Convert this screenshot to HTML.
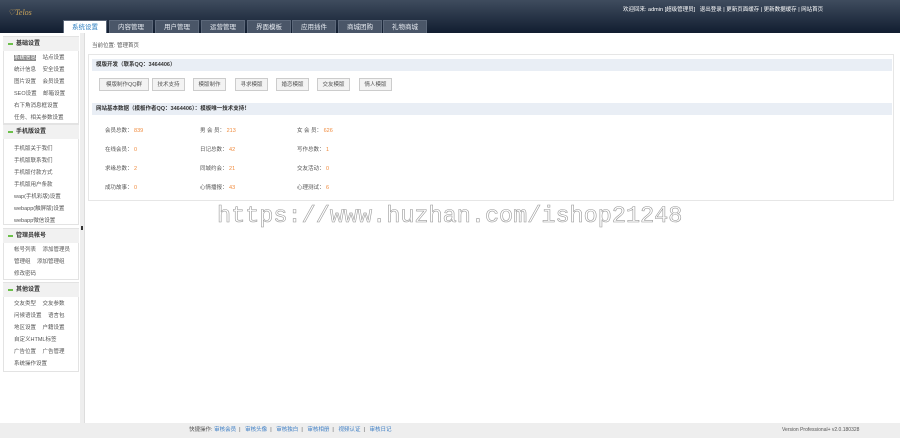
<!DOCTYPE html><html><head><meta charset="utf-8"><style>
*{margin:0;padding:0;box-sizing:border-box}
body{width:900px;height:438px;overflow:hidden;background:#fff;font-family:"Liberation Sans","Noto Sans CJK SC",sans-serif;font-size:6px;color:#555;position:relative}
.hd{position:absolute;left:0;top:0;width:900px;height:33px;background:linear-gradient(#3f4c5e,#111d30)}
.logo{position:absolute;left:8px;top:8px;color:#c9a35a;font-style:italic;font-size:8px;font-family:"Liberation Serif",serif}
.top{position:absolute;left:623px;top:5px;color:#fff;font-size:5.5px;white-space:nowrap}
.tab{position:absolute;top:20px;height:13px;width:44px;background:#4a5668;color:#e8ecf2;font-size:6.5px;text-align:center;line-height:13px;border:1px solid #5c687a;border-bottom:0}
.tab.on{background:#fff;color:#2d7fc1}
.sb{position:absolute;left:3px;width:76px;border:1px solid #e3e3e3;background:#fff}
.sh{position:absolute;left:3px;width:76px;height:14px;background:#f1f1f1;font-weight:bold;color:#333;line-height:14px;padding-left:13px;font-size:6px}
.sh:before{content:"";position:absolute;left:5px;top:6px;width:5px;height:2px;background:#6cc04a}
.it{position:absolute;left:14px}
.it div{height:12px;line-height:12px;white-space:nowrap;font-size:5.5px}
.it span{margin-right:5px}
.hl{background:#888;color:#fff}
.gap{position:absolute;left:80px;top:33px;width:4px;height:390px;background:#eee}
.bc{position:absolute;left:92px;top:41px;font-size:5.5px}
.box{position:absolute;left:88px;top:54px;width:806px;height:147px;border:1px solid #e6e6e6}
.bh{position:absolute;left:92px;width:800px;height:12px;background:#e9eef5;font-weight:bold;color:#333;line-height:12px;padding-left:4px;font-size:5.5px}
.btn{position:absolute;top:78px;height:13px;line-height:13px;border:1px solid #ccc;background:#f3f3f3;font-size:5.5px;text-align:center}
.st{position:absolute;font-size:5.5px}.st b{font-weight:normal;color:#f08a3c}
.wm{position:absolute;left:217px;top:203px;font-family:"Liberation Mono",monospace;font-size:23.5px;color:#fff;-webkit-text-stroke:0.6px #999;white-space:nowrap}
.ft{position:absolute;left:0;top:423px;width:900px;height:15px;background:#eee;font-size:5.5px;line-height:15px}
.ft a{color:#3a7cc4}
</style></head><body>
<div class="hd"><div class="logo">♡Telos</div>
<div class="top">欢迎回来: admin [超级管理员] &nbsp; 退出登录 | 更新页面缓存 | 更新数据缓存 | 网站首页</div>
<div class="tab on" style="left:63px">系统设置</div><div class="tab" style="left:109px">内容管理</div><div class="tab" style="left:155px">用户管理</div><div class="tab" style="left:201px">运营管理</div><div class="tab" style="left:247px">界面模板</div><div class="tab" style="left:292px">应用插件</div><div class="tab" style="left:338px">商城团购</div><div class="tab" style="left:383px">礼物商城</div>
</div>
<div class="sb" style="top:36px;height:88px"></div>
<div class="sb" style="top:124px;height:101px"></div>
<div class="sb" style="top:228px;height:52px"></div>
<div class="sb" style="top:282px;height:90px"></div>
<div class="sh" style="top:37px">基础设置</div>
<div class="it" style="top:52px"><div><span class="hl">系统信息</span> 站点设置</div><div><span>统计信息</span> 安全设置</div><div><span>图片设置</span> 会员设置</div><div><span>SEO设置</span> 邮箱设置</div><div>右下角消息框设置</div><div>任务、相关参数设置</div></div>
<div class="sh" style="top:125px">手机版设置</div>
<div class="it" style="top:143px"><div>手机版关于我们</div><div>手机版联系我们</div><div>手机版付款方式</div><div>手机版用户条款</div><div>wap(手机彩版)设置</div><div>webapp(触屏版)设置</div><div>webapp微信设置</div></div>
<div class="sh" style="top:229px">管理员帐号</div>
<div class="it" style="top:244px"><div><span>帐号列表</span> 添加管理员</div><div><span>管理组</span> 添加管理组</div><div>修改密码</div></div>
<div class="sh" style="top:283px">其他设置</div>
<div class="it" style="top:298px"><div><span>交友类型</span> 交友参数</div><div><span>问候语设置</span> 语言包</div><div><span>地区设置</span> 户籍设置</div><div>自定义HTML标签</div><div><span>广告位置</span> 广告管理</div><div>系统操作设置</div></div>
<div class="gap"></div>
<div style="position:absolute;left:84px;top:33px;width:1px;height:390px;background:#ddd"></div>
<div style="position:absolute;left:81px;top:226px;width:2px;height:4px;background:#333"></div>
<div class="bc">当前位置: 管理首页</div>
<div class="box"></div>
<div class="bh" style="top:59px">模版开发（联系QQ：3464406）</div>
<div class="btn" style="left:99px;width:50px">模版制作QQ群</div><div class="btn" style="left:152px;width:33px">技术支持</div><div class="btn" style="left:193px;width:33px">模版制作</div><div class="btn" style="left:235px;width:33px">寻求模版</div><div class="btn" style="left:276px;width:33px">婚恋模版</div><div class="btn" style="left:317px;width:33px">交友模版</div><div class="btn" style="left:359px;width:33px">情人模版</div>
<div class="bh" style="top:103px">网站基本数据（模板作者QQ：3464406）：模板唯一技术支持！</div>
<div class="st" style="left:105px;top:126px">会员总数： <b>839</b></div><div class="st" style="left:200px;top:126px">男 会 员： <b>213</b></div><div class="st" style="left:297px;top:126px">女 会 员： <b>626</b></div>
<div class="st" style="left:105px;top:145px">在线会员： <b>0</b></div><div class="st" style="left:200px;top:145px">日记总数： <b>42</b></div><div class="st" style="left:297px;top:145px">写作总数： <b>1</b></div>
<div class="st" style="left:105px;top:164px">求缘总数： <b>2</b></div><div class="st" style="left:200px;top:164px">同城约会： <b>21</b></div><div class="st" style="left:297px;top:164px">交友活动： <b>0</b></div>
<div class="st" style="left:105px;top:183px">成功故事： <b>0</b></div><div class="st" style="left:200px;top:183px">心情播报： <b>43</b></div><div class="st" style="left:297px;top:183px">心理测试： <b>6</b></div>
<div class="wm">https://www.huzhan.com/ishop21248</div>
<div class="ft"><span style="position:absolute;left:189px">快捷操作: <a>审核会员</a> &nbsp;| &nbsp; <a>审核头像</a> &nbsp;| &nbsp; <a>审核独白</a> &nbsp;| &nbsp; <a>审核相册</a> &nbsp;| &nbsp; <a>视频认证</a> &nbsp;| &nbsp; <a>审核日记</a></span><span style="position:absolute;left:782px;font-size:5px">Version Professional+ v2.0.180328</span></div>
</body></html>
